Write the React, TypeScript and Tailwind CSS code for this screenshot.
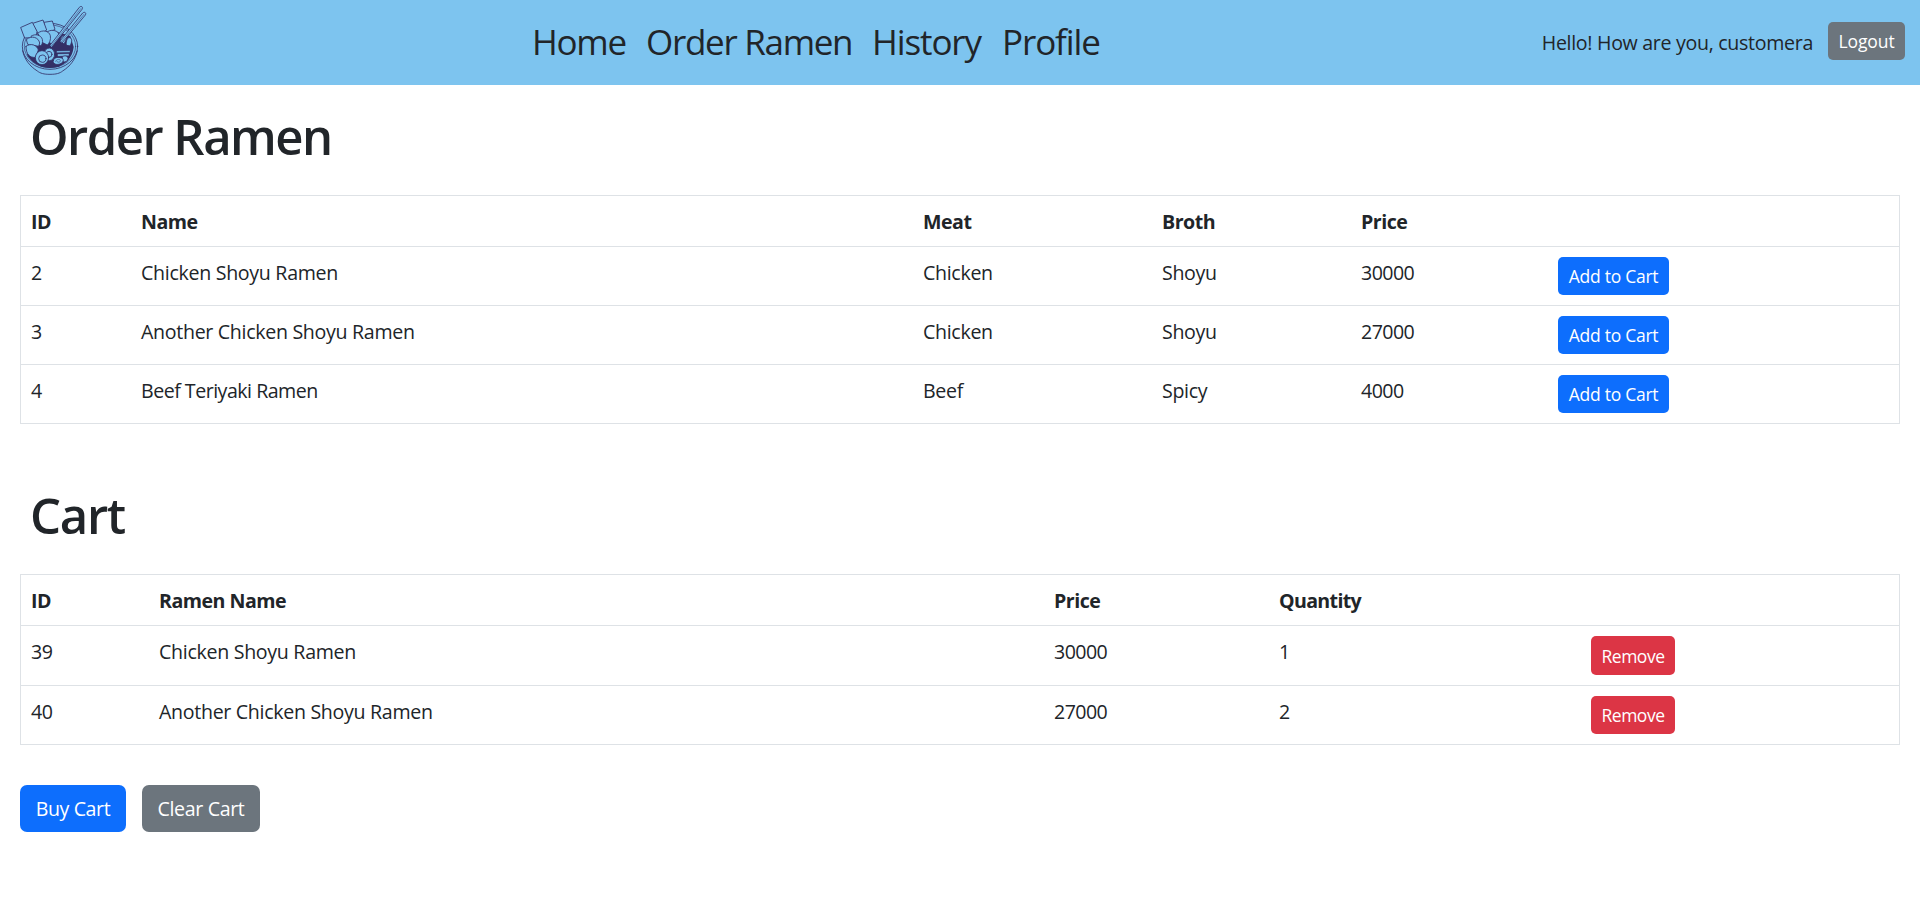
import React from "react";

type Ramen = { id: number; name: string; nameClass: string; meat: string; broth: string; price: string };
type CartItem = { id: number; name: string; nameClass: string; price: string; quantity: string; rowClass: string; buttonClass: string };

const ramens: Ramen[] = [
  { id: 2, name: "Chicken Shoyu Ramen", nameClass: "tracking-[-0.3px]", meat: "Chicken", broth: "Shoyu", price: "30000" },
  { id: 3, name: "Another Chicken Shoyu Ramen", nameClass: "tracking-[-0.31px]", meat: "Chicken", broth: "Shoyu", price: "27000" },
  { id: 4, name: "Beef Teriyaki Ramen", nameClass: "tracking-[-0.5px]", meat: "Beef", broth: "Spicy", price: "4000" },
];

const cart: CartItem[] = [
  { id: 39, name: "Chicken Shoyu Ramen", nameClass: "tracking-[-0.3px]", price: "30000", quantity: "1", rowClass: "h-[60px]", buttonClass: "h-[39px]" },
  { id: 40, name: "Another Chicken Shoyu Ramen", nameClass: "tracking-[-0.31px]", price: "27000", quantity: "2", rowClass: "h-[59px]", buttonClass: "h-[38px]" },
];

const tableClass = "w-full table-fixed border-separate border-spacing-0 border-x border-t border-[#dee2e6] text-left";
const base = "border-b border-[#dee2e6] px-2.5 pb-0 align-top";
const cell = base + " pt-[11px]";
const actionCell = base + " pt-2.5";
const head = cell + " font-bold tracking-[-0.5px]";
const num = cell + " tracking-[-0.55px]";
const smallButton = "block rounded-[5px] text-center text-[17.5px] leading-[38px] whitespace-nowrap text-white";

function RamenLogo() {
  return (
    <svg className="block h-[73px] w-[72px]" viewBox="51 9 216 219" fill="none" stroke="#332f66" strokeWidth="2.5" strokeLinejoin="round" strokeLinecap="round">
      <ellipse cx="147" cy="139" rx="83" ry="69" fill="#7dc4ef" />
      <ellipse cx="147" cy="139" rx="77" ry="64" strokeWidth="1.8" />
      <path d="M65 152c5 27 22 47 44 61 9 7 19 10 38 10s29-3 38-10c22-14 38-34 44-61" />
      <path fill="#332f66" stroke="none" d="M78 164l30-60 50-12 50 16 10 33c-3 31-24 54-52 61-12 3-27 3-38 0-23-7-40-19-50-38z" />
      <g fill="#7dc4ef">
        <path d="M129 67l25-4 8 25-24 14z" />
        <path d="M95 70l31-10 11 30-22 16z" />
        <path d="M60 82l34-15 14 27-3 18-33 2z" />
        <path d="M136 98c10-11 32-9 38 4 2 9-8 16-22 30l-12-8z" />
        <path d="M111 99c13-11 33-7 37 8 2 12-2 22-9 28l-16-8z" />
        <path d="M91 108c12-8 29-3 33 10 2 10-1 16-5 19l-17-7z" />
        <path d="M77 118c15-13 36-6 39 11l-3 10-32-6z" />
        <path d="M75 139c14-11 33-4 37 11l-8 22c-18 2-29-9-29-33z" />
        <path d="M178 124c0-11 6-19 13-17 8 3 6 12-2 24zM196 135c-2-13 4-24 11-22 7 3 7 13 0 24z" />
        <ellipse cx="145" cy="163" rx="16" ry="19" />
        <circle cx="144" cy="163" r="9" />
        <ellipse cx="123" cy="173" rx="20" ry="21" />
        <circle cx="124" cy="176" r="11" />
        <path d="M167 153l40-1v5l-40 1zM170 162l34-1v6l-34 2z" strokeWidth="1.2" />
        <path d="M184 171c5-6 16-4 17 4 0 8-7 12-14 11z" />
        <path d="M157 181c2-8 12-10 20-8 9 0 12 7 8 13-5 7-16 9-23 6-5-3-7-7-5-11z" />
        <path d="M164 184c2-6 11-8 14-3 1 5-5 8-10 4" strokeWidth="1.6" />
        <path d="M147 136l88-114c6-6 12-1 8 6l-91 114z" />
        <path d="M177 123l68-84c6-5 12 0 8 6l-70 84z" />
      </g>
      <path d="M151 138l88-112M181 125l68-82" strokeWidth="1.4" />
    </svg>
  );
}

function Header() {
  return (
    <header className="flex h-[85px] items-center bg-[#7dc4ef] pr-[15px] pl-[18px]">
      <div className="w-[514px] pb-[6px]"><RamenLogo /></div>
      <nav className="flex grow pb-[1px] text-[35px] leading-[52px] whitespace-nowrap">
        <a className="w-[114px] tracking-[-1.25px]">Home</a>
        <a className="w-[226px] tracking-[-1.3px]">Order Ramen</a>
        <a className="w-[130px] tracking-[-1.1px]">History</a>
        <a className="tracking-[-1.1px]">Profile</a>
      </nav>
      <span className="mr-[15px] whitespace-nowrap tracking-[-0.31px]">Hello! How are you, customera</span>
      <button className="mb-[3px] h-[38px] w-[77px] rounded-[5px] bg-[#6c757d] text-[17.5px] leading-[38px] tracking-[-0.1px] text-white">Logout</button>
    </header>
  );
}

export default function App() {
  return (
    <div className="min-h-[912px] bg-white font-['Open_Sans',sans-serif] text-[19.6px] leading-[30px] text-[#212529]">
      <Header />
      <main className="px-5">
        <h1 className="pt-[21px] pb-[29px] pl-2.5 text-[49px] leading-[60px] font-semibold tracking-[-1.5px]">Order Ramen</h1>
        <table className={tableClass}>
          <colgroup>
            <col className="w-[110px]" /><col className="w-[782px]" /><col className="w-[239px]" /><col className="w-[199px]" /><col className="w-[197px]" /><col />
          </colgroup>
          <thead>
            <tr className="h-[51px]">
              <th className={head}>ID</th><th className={head}>Name</th><th className={head}>Meat</th><th className={head}>Broth</th><th className={head}>Price</th><th className={head} />
            </tr>
          </thead>
          <tbody>
            {ramens.map((r) => (
              <tr key={r.id} className="h-[59px]">
                <td className={num}>{r.id}</td>
                <td className={cell + " " + r.nameClass}>{r.name}</td>
                <td className={cell + " tracking-[-0.32px]"}>{r.meat}</td>
                <td className={cell + " tracking-[-0.35px]"}>{r.broth}</td>
                <td className={num}>{r.price}</td>
                <td className={actionCell}><button className={smallButton + " h-[38px] w-[111px] bg-[#0d6efd] tracking-[-0.25px]"}>Add to Cart</button></td>
              </tr>
            ))}
          </tbody>
        </table>
        <h1 className="pt-[61px] pb-[29px] pl-2.5 text-[49px] leading-[60px] font-semibold tracking-[-1.3px]">Cart</h1>
        <table className={tableClass}>
          <colgroup>
            <col className="w-[128px]" /><col className="w-[895px]" /><col className="w-[225px]" /><col className="w-[312px]" /><col />
          </colgroup>
          <thead>
            <tr className="h-[51px]">
              <th className={head}>ID</th><th className={head}>Ramen Name</th><th className={head}>Price</th><th className={head + " tracking-[-0.65px]"}>Quantity</th><th className={head} />
            </tr>
          </thead>
          <tbody>
            {cart.map((c) => (
              <tr key={c.id} className={c.rowClass}>
                <td className={num}>{c.id}</td>
                <td className={cell + " " + c.nameClass}>{c.name}</td>
                <td className={num}>{c.price}</td>
                <td className={num}>{c.quantity}</td>
                <td className={actionCell}><button className={smallButton + " " + c.buttonClass + " w-[84px] bg-[#dc3545] tracking-[-0.5px]"}>Remove</button></td>
              </tr>
            ))}
          </tbody>
        </table>
        <div className="flex gap-4 pt-10 text-white">
          <button className="h-[47px] w-[106px] rounded-[7px] bg-[#0d6efd] tracking-[-0.4px]">Buy Cart</button>
          <button className="h-[47px] w-[118px] rounded-[7px] bg-[#6c757d] tracking-[-0.35px]">Clear Cart</button>
        </div>
      </main>
    </div>
  );
}
